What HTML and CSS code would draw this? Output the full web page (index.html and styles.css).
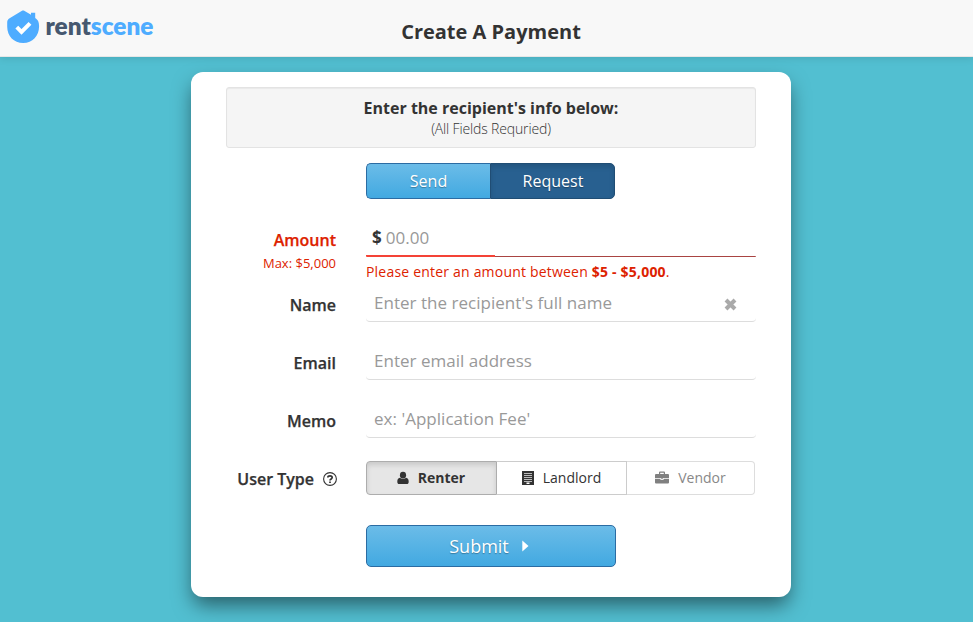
FILE: index.html
```html
<!DOCTYPE html>
<html lang="en">
<head>
<meta charset="utf-8">
<title>Create A Payment</title>
<link rel="stylesheet" href="styles.css">
</head>
<body>
<header class="topbar">
  <svg class="logo" width="156" height="48" viewBox="0 0 156 48" role="img" aria-label="rentscene">
    <path fill="#4eacff" d="M22 10.800c.7-.4 1.500-.4 2.200 0L31 14.700V12.700h4.200v5.200c2.700 1.800 3.900 3.700 3.900 8.300C39.100 36 32.500 43 23.200 43S7.200 36 7.200 26.700v-4.200c0-2.200.8-3.300 2.400-4.300z"/>
    <path fill="none" stroke="#fff" stroke-width="4" d="M16.800 27.200l4.700 4.800 8.500-8.600"/>
    <text class="logo-text" x="45.500" y="35" textLength="108" lengthAdjust="spacingAndGlyphs"><tspan fill="#465870">rent</tspan><tspan fill="#4eacff">scene</tspan></text>
  </svg>
  <h1>Create A Payment</h1>
</header>
<main class="card">
  <div class="well">
    <strong>Enter the recipient's info below:</strong>
    <small>(All Fields Requried)</small>
  </div>
  <div class="toggle">
    <button class="blue">Send</button>
    <button class="blue active">Request</button>
  </div>
  <div class="row amount">
    <div class="label">Amount<small>Max: $5,000</small></div>
    <div class="control">
      <div class="field"><b>$</b><span>00.00</span></div>
      <p class="error">Please enter an amount between <b>$5 - $5,000</b>.</p>
    </div>
  </div>
  <div class="row">
    <div class="label">Name</div>
    <div class="field"><span>Enter the recipient's full name</span>
      <svg class="clear" width="13" height="13" viewBox="0 0 13 13"><path d="M2 2l9 9m0-9l-9 9" stroke="#aaa" stroke-width="4"/></svg>
    </div>
  </div>
  <div class="row">
    <div class="label">Email</div>
    <div class="field"><span>Enter email address</span></div>
  </div>
  <div class="row">
    <div class="label">Memo</div>
    <div class="field"><span>ex: 'Application Fee'</span></div>
  </div>
  <div class="row types-row">
    <div class="label help">User Type
      <svg width="14" height="14" viewBox="0 0 14 14" fill="none" stroke="#333"><circle cx="7" cy="7" r="6.400" stroke-width="1.100"/><path d="M4.800 5.500C5 3.300 9.200 3.300 9.200 5.600 9.200 7 7 6.900 7 8.600M7 9.400v1.700" stroke-width="1.700"/></svg>
    </div>
    <div class="types">
      <button class="type selected"><svg width="12" height="14" viewBox="0 0 12 14" fill="#333"><ellipse cx="6" cy="4.200" rx="3.100" ry="3.400"/><path d="M3 6.700C1 7 .3 8.700.3 10.700.3 12.200 1 13 2.200 13h7.600c1.200 0 1.900-.8 1.900-2.300 0-2-.7-3.700-2.700-4-1.700 1.600-4.300 1.600-6 0z"/></svg>Renter</button>
      <button class="type"><svg width="12" height="14" viewBox="0 0 12 14"><path fill="#333" d="M0 0h12v14H0z"/><path stroke="#ddd" stroke-width=".8" d="M2 2.500h8M2 4.500h8M2 6.500h8M2 8.500h8M2 10.500h8"/><path fill="#fff" d="M4.500 11.500h3V13h-3z"/></svg>Landlord</button>
      <button class="type muted"><svg width="14" height="13" viewBox="0 0 14 13" fill="#808080"><path fill-rule="evenodd" d="M4 3V1.500Q4 .5 5 .5h4q1 0 1 1V3h3q1 0 1 1v3H0V4q0-1 1-1zm1.200 0h3.600V1.700H5.200zM0 7.800h5.500V9h3V7.800H14v3.700q0 1-1 1H1q-1 0-1-1z"/><path d="M6.300 7h1.400v1.200H6.300z"/></svg>Vendor</button>
    </div>
  </div>
  <button class="blue submit">Submit<svg width="7" height="12" viewBox="0 0 7 12"><path fill="#fff" d="M.3.500L6.500 6l-6.200 5.500z"/></svg></button>
</main>
</body>
</html>
```
FILE: styles.css
```css
* { box-sizing: border-box; }
body {
  margin: 0;
  height: 622px;
  overflow: hidden;
  background: #52bfd1;
  color: #333;
  font: 16px/22px "Open Sans", sans-serif;
}
button { font-family: inherit; margin: 0; padding: 0; }
.topbar {
  display: grid;
  grid-template-columns: 191px 600px 1fr;
  height: 57px;
  background: #f8f8f8;
  border-bottom: 1px solid #e7e7e7;
  box-shadow: 0 1px 8px rgba(0, 0, 0, .12);
}
.logo { display: block; }
.logo-text { font: 800 24.5px Lato, sans-serif; }
h1 {
  margin: 18px 0 0;
  font-size: 20px;
  line-height: 28px;
  font-weight: 700;
  text-align: center;
}
.card {
  width: 600px;
  height: 525px;
  margin: 15px 0 0 191px;
  padding: 15px 35px;
  background: #fff;
  border-radius: 12px;
  box-shadow: 0 10px 20px -2px rgba(0, 0, 0, .5);
}
.well {
  height: 61px;
  padding-top: 9px;
  text-align: center;
  background: #f5f5f5;
  border: 1px solid #e3e3e3;
  border-radius: 3px;
  box-shadow: inset 0 1px 1px rgba(0, 0, 0, .05);
}
.well strong { display: block; font-weight: 700; }
.well small { display: block; margin-top: 1px; font-size: 14px; letter-spacing: -.15px; line-height: 18px; font-weight: 300; }
.blue {
  color: #fff;
  font-size: 16px;
  border: 1px solid #2b6ca3;
  background: linear-gradient(#6bbce8, #42a9e1);
  text-shadow: 0 1px 1px rgba(0, 0, 0, .3);
}
.toggle {
  display: grid;
  grid-template-columns: 124px 125px;
  width: 249px;
  height: 36px;
  margin: 15px 0 0 140px;
}
.toggle .blue { border-radius: 5px 0 0 5px; border-right: 0; }
.toggle .active {
  padding-left: 1px;
  background: #286090;
  border: 1px solid #204d74;
  border-radius: 0 5px 5px 0;
  box-shadow: inset 0 3px 5px rgba(0, 0, 0, .125);
}
.row {
  display: grid;
  grid-template-columns: 110px 390px;
  column-gap: 30px;
  height: 36px;
  margin-bottom: 22px;
}
.row.amount { height: 65px; margin: 22px 0 0; }
.label { text-align: right; font-weight: 600; padding-top: 8px; -webkit-text-stroke: .25px; }
.amount .label { color: #dd2200; }
.label small { display: block; font-size: 13px; line-height: 24px; font-weight: 400; -webkit-text-stroke: 0; }
.field {
  display: flex;
  align-items: center;
  height: 36px;
  padding: 0 8px 2px;
  border-bottom: 1px solid #ddd;
  border-radius: 4px;
  font-size: 17px;
  letter-spacing: .02px;
  color: #999;
}
.clear { margin: 3px 11px 0 auto; }
.amount .field {
  padding: 0 6px 3px;
  gap: 4px;
  height: 36px;
  border: 0;
  background:
    linear-gradient(#f44336, #f44336) left bottom / 129px 2px no-repeat,
    linear-gradient(#a94442, #a94442) left bottom / 100% 1px no-repeat;
  border-radius: 1px;
}
.amount .field b { color: #333; font-weight: 700; }
.error { margin: 4px 0 0; font-size: 14px; letter-spacing: .2px; color: #dd2200; }
.error b { font-weight: 700; }
.types-row { height: 34px; margin: 23px 0 30px; }
.label.help { display: flex; align-items: center; justify-content: flex-end; gap: 9px; padding: 2px 0 0; margin: 0 -1px 0 -10px; }
.types { display: grid; grid-template-columns: 131px 130px 128px; }
.type {
  display: flex;
  align-items: center;
  justify-content: center;
  gap: 9px;
  padding-bottom: 1px;
  color: #333;
  font-size: 14px;
  background: #fff;
  border: 1px solid #ccc;
  border-left: 0;
}
.selected {
  padding-right: 1px;
  font-weight: 700;
  background: #e6e6e6;
  border: 1px solid #adadad;
  border-radius: 4px 0 0 4px;
  box-shadow: inset 0 3px 5px rgba(0, 0, 0, .125);
}
.muted { color: #888; border-color: #ddd; border-radius: 0 4px 4px 0; }
.submit {
  display: flex;
  align-items: center;
  justify-content: center;
  gap: 13px;
  width: 250px;
  height: 42px;
  margin-left: 140px;
  padding-right: 4px;
  border-radius: 5px;
  font-size: 18px;
}
```
